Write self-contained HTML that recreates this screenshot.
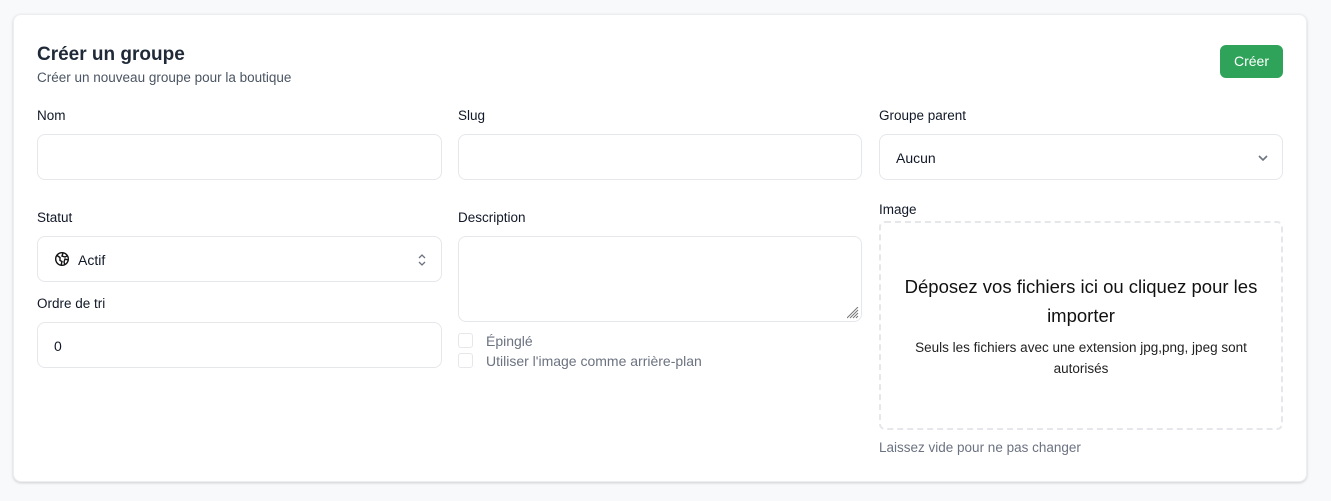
<!DOCTYPE html>
<html><head><meta charset="utf-8"><style>
*{box-sizing:border-box;margin:0;padding:0}
body{width:1331px;height:501px;background:#f8f9fb;font-family:"Liberation Sans",sans-serif;color:#111827;position:relative;overflow:hidden}
.card{position:absolute;left:13px;top:14px;width:1294px;height:468px;background:#fff;border-radius:8px;box-shadow:0 1px 3px rgba(0,0,0,.12),0 1px 2px rgba(0,0,0,.06);border:1px solid #eceef1}
.abs{position:absolute}
h1{position:absolute;left:37px;top:44px;font-size:19px;font-weight:bold;color:#1f2937}
.sub{left:37px;top:70px;font-size:13.5px;color:#4b5563}
.btn{left:1220px;top:45px;width:63px;height:33px;background:#2fa35a;border-radius:6px;color:#fff;font-size:14px;text-align:center;line-height:33px}
.lbl{font-size:13.5px;color:#111827}
.in{border:1px solid #e5e7eb;border-radius:8px;background:#fff;font-size:14px;color:#111827}
.cb{width:15px;height:15px;border:1px solid #e5e7eb;border-radius:3px}
.muted{color:#6b7280;font-size:14px}
</style></head><body>
<div class="card"></div>
<h1>Créer un groupe</h1>
<div class="abs sub">Créer un nouveau groupe pour la boutique</div>
<div class="abs btn">Créer</div>

<div class="abs lbl" style="left:37px;top:108px">Nom</div>
<div class="abs in" style="left:37px;top:134px;width:405px;height:46px"></div>
<div class="abs lbl" style="left:458px;top:108px">Slug</div>
<div class="abs in" style="left:458px;top:134px;width:404px;height:46px"></div>
<div class="abs lbl" style="left:879px;top:108px">Groupe parent</div>
<div class="abs in" style="left:879px;top:134px;width:404px;height:46px;padding:15px 16px">Aucun
<svg class="abs" style="right:13px;top:17px" width="12" height="12" viewBox="0 0 12 12"><path d="M2 4l4 4 4-4" fill="none" stroke="#6b7280" stroke-width="1.6"/></svg></div>

<div class="abs lbl" style="left:37px;top:210px">Statut</div>
<div class="abs in" style="left:37px;top:236px;width:405px;height:46px;padding:15px 0 0 40px">Actif
<svg class="abs" style="left:16px;top:14px" width="16" height="16" viewBox="0 0 16 16" fill="none" stroke="#111" stroke-width="1.4"><circle cx="8" cy="8" r="6.3"/><path d="M3 4.5l3 2 0 3 2 1-1 4M9 2l-1 3 3 1 2-1M14 9l-3-1-1 3 1 3"/></svg>
<svg class="abs" style="right:14px;top:16px" width="10" height="14" viewBox="0 0 10 14"><path d="M2 5l3-3 3 3M2 9l3 3 3-3" fill="none" stroke="#6b7280" stroke-width="1.3"/></svg></div>
<div class="abs lbl" style="left:37px;top:296px">Ordre de tri</div>
<div class="abs in" style="left:37px;top:322px;width:405px;height:46px;padding:15px 16px">0</div>

<div class="abs lbl" style="left:458px;top:210px">Description</div>
<div class="abs in" style="left:458px;top:236px;width:404px;height:86px">
<svg class="abs" style="right:2px;bottom:2px" width="12" height="12" viewBox="0 0 12 12" stroke="#777" stroke-width="1"><path d="M11 3L3 11M11 6L6 11M11 9L9 11M11 0L0 11"/></svg></div>
<div class="abs cb" style="left:458px;top:333px"></div>
<div class="abs muted" style="left:486px;top:333px">Épinglé</div>
<div class="abs cb" style="left:458px;top:353px"></div>
<div class="abs muted" style="left:486px;top:353px">Utiliser l'image comme arrière-plan</div>

<div class="abs lbl" style="left:879px;top:202px">Image</div>
<div class="abs" style="left:879px;top:221px;width:404px;height:209px;border:2px dashed #e5e7eb;border-radius:6px;text-align:center">
<div style="margin:49px 20px 0;font-size:18.5px;line-height:29px;color:#111">Déposez vos fichiers ici ou cliquez pour les importer</div>
<div style="margin:7px 20px 0;font-size:13.5px;line-height:21px;color:#222">Seuls les fichiers avec une extension jpg,png, jpeg sont autorisés</div>
</div>
<div class="abs muted" style="left:879px;top:440px;font-size:13.5px">Laissez vide pour ne pas changer</div>
</body></html>
